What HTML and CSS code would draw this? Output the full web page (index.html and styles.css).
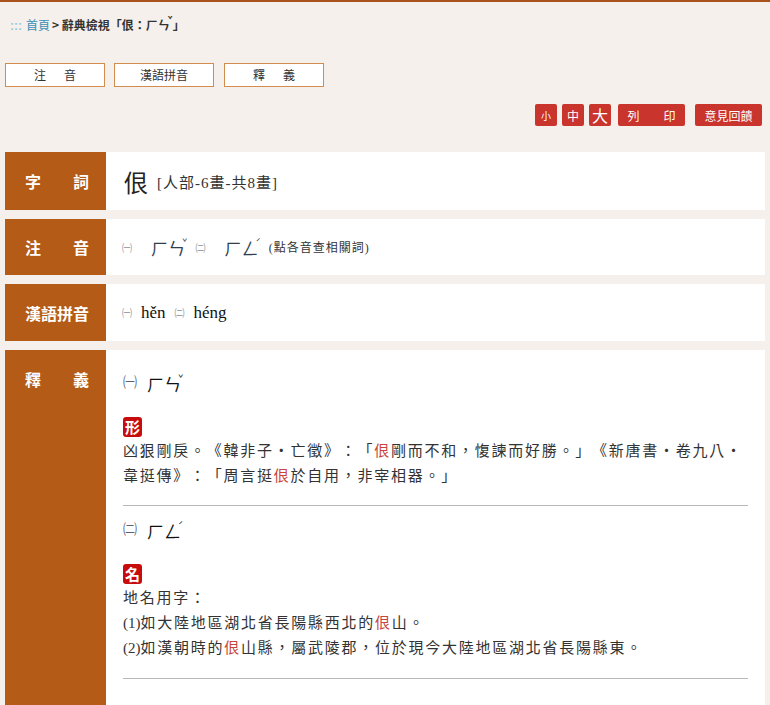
FILE: index.html
```html
<!DOCTYPE html>
<html lang="zh-Hant">
<head>
<meta charset="utf-8">
<title>辭典檢視</title>
<link rel="stylesheet" href="styles.css">
</head>
<body>
<div class="page">
  <div class="crumb"><span class="dots">:::</span><a class="home" href="#">首頁</a><b>&gt; 辭典檢視「佷：ㄏㄣ<span class="tone-s">ˇ</span>」</b></div>

  <div class="tabs">
    <a class="tab" href="#">注&emsp;&ensp;音</a>
    <a class="tab" href="#">漢語拼音</a>
    <a class="tab" href="#">釋&emsp;&ensp;義</a>
  </div>

  <div class="tools">
    <a class="btn sq s" href="#">小</a>
    <a class="btn sq m" href="#">中</a>
    <a class="btn sq l" href="#">大</a>
    <a class="btn wide" href="#">列&emsp;&emsp;印</a>
    <a class="btn wide gap" href="#">意見回饋</a>
  </div>

  <div class="rows">
    <div class="row r1">
      <div class="label"><span class="lt">字詞</span></div>
      <div class="cell"><span class="big">佷</span> <span class="info">[人部-6畫-共8畫]</span></div>
    </div>
    <div class="row r2">
      <div class="label"><span class="lt">注音</span></div>
      <div class="cell">
        <span class="num">㈠</span><a class="zy link" href="#">ㄏㄣ<span class="tone">ˇ</span></a>
        <span class="num">㈡</span><a class="zy link" href="#">ㄏㄥ<span class="tone">ˊ</span></a>
        <span class="hint">(點各音查相關詞)</span>
      </div>
    </div>
    <div class="row r3">
      <div class="label"><span class="lt">漢語拼音</span></div>
      <div class="cell">
        <span class="num">㈠</span><span class="py">hěn</span>
        <span class="num">㈡</span><span class="py">héng</span>
      </div>
    </div>
    <div class="row r4">
      <div class="label top"><span class="lt">釋義</span></div>
      <div class="cell defs">
        <div class="sect">
          <div class="head"><span class="hnum">㈠</span><span class="zy">ㄏㄣ<span class="tone">ˇ</span></span></div>
          <div class="badge">形</div>
          <p class="txt">凶狠剛戾。《韓非子‧亡徵》：「<span class="hl">佷</span>剛而不和，愎諫而好勝。」《新唐書‧卷九八‧韋挺傳》：「周言挺<span class="hl">佷</span>於自用，非宰相器。」</p>
        </div>
        <hr class="rule">
        <div class="sect">
          <div class="head"><span class="hnum">㈡</span><span class="zy">ㄏㄥ<span class="tone">ˊ</span></span></div>
          <div class="badge">名</div>
          <p class="txt">地名用字：</p>
          <p class="txt"><span class="pn">(1)</span>如大陸地區湖北省長陽縣西北的<span class="hl">佷</span>山。</p>
          <p class="txt"><span class="pn">(2)</span>如漢朝時的<span class="hl">佷</span>山縣，屬武陵郡，位於現今大陸地區湖北省長陽縣東。</p>
        </div>
        <hr class="rule">
      </div>
    </div>
  </div>
</div>
</body>
</html>
```

FILE: styles.css
```css
html, body {
  margin: 0;
  padding: 0;
  background: #f5f0eb;
}
body {
  border-top: 2px solid #a9521c;
  font-family: "Noto Sans CJK TC", "Noto Sans", sans-serif;
  color: #333;
  text-spacing-trim: space-all;
}
.page {
  padding: 0 5px;
}
.crumb {
  padding: 10px 0 0 5px;
  height: 18px;
  line-height: 16px;
  font-size: 12px;
  color: #333;
}
.crumb .dots {
  color: #9cc9dc;
  font-family: "Liberation Sans", sans-serif;
  font-size: 12px;
  font-weight: 700;
  margin-right: 4px;
}
.crumb .home {
  color: #3b8db5;
  text-decoration: none;
  margin-right: 2px;
}
.crumb b {
  font-weight: 700;
  color: #333;
}
.tone-s {
  font-size: 8px;
  vertical-align: 7px;
  margin-left: -2px;
}
.tabs {
  margin-top: 33px;
  display: flex;
  gap: 9px;
}
.tab {
  box-sizing: border-box;
  width: 100px;
  height: 24px;
  line-height: 22px;
  border: 1px solid #d28c4e;
  background: #fff;
  text-align: center;
  font-size: 12px;
  color: #333;
  text-decoration: none;
}
.tab + .tab + .tab { margin-left: 1px; }
.tools {
  margin-top: 17px;
  margin-right: 3px;
  display: flex;
  justify-content: flex-end;
  gap: 5px;
  height: 22px;
}
.btn {
  display: flex;
  align-items: center;
  justify-content: center;
  height: 22px;
  background: #c9342c;
  color: #fff;
  text-decoration: none;
  border-radius: 2px;
  font-size: 12px;
}
.btn.sq { width: 22px; }
.btn.s { font-size: 10px; }
.btn.m { font-size: 12px; }
.btn.l { font-size: 16px; }
.btn.wide { width: 67px; margin-left: 2px; }
.btn.gap { margin-left: 5px; }
.rows {
  margin-top: 26px;
  display: flex;
  flex-direction: column;
  gap: 9px;
}
.row {
  display: flex;
  background: #fff;
}
.r1 { min-height: 58px; }
.r2 { min-height: 56px; }
.r3 { min-height: 57px; }
.label {
  flex: 0 0 101px;
  box-sizing: border-box;
  padding: 0 17px 0 20px;
  background: #b45b17;
  color: #fff;
  font-size: 16px;
  font-weight: 700;
  display: flex;
  align-items: center;
}
.label .lt {
  display: block;
  width: 100%;
  text-align: justify;
  text-align-last: justify;
}
.label.top {
  align-items: flex-start;
  padding-top: 17px;
  line-height: 25px;
}
.cell {
  flex: 1;
  display: flex;
  align-items: center;
  padding: 0 17px 0 16px;
  font-family: "Liberation Serif", "Noto Sans CJK TC", serif;
  color: #222;
}
.big {
  font-size: 24px;
  font-family: "Noto Sans CJK TC", serif;
  font-weight: 400;
  margin: 0 9px 0 2px;
  color: #222;
}
.info {
  font-size: 15px;
  letter-spacing: 1px;
  color: #333;
}
.num {
  font-family: "Noto Sans CJK TC", sans-serif;
  font-size: 10px;
  color: #8a9099;
  margin-right: 9px;
}
.zy {
  font-family: "Noto Sans CJK TC", sans-serif;
  font-size: 17px;
  letter-spacing: 0;
  color: #2f3d4c;
  text-decoration: none;
  margin-right: 8px;
}
.zy .tone {
  font-size: 9px;
  vertical-align: 9px;
  margin-left: -3px;
  letter-spacing: 0;
}
.r2 .num + .zy { margin-left: 10px; }
.hint {
  font-size: 12px;
  letter-spacing: 1px;
  color: #333;
}
.py {
  font-size: 17px;
  color: #111;
  margin-right: 9px;
}
.r3 .num { margin-right: 9px; }
.cell.defs {
  display: block;
  padding: 16px 17px 30px 17px;
}
.sect {
  color: #333;
}
.head {
  height: 30px;
  line-height: 30px;
  display: flex;
  align-items: center;
  margin-bottom: 21px;
}
.hnum {
  font-family: "Noto Sans CJK TC", sans-serif;
  font-size: 14px;
  color: #5a6270;
  margin-right: 10px;
}
.head .zy {
  color: #111;
}
.badge {
  width: 19px;
  height: 20px;
  background: #c60c0c;
  color: #fff;
  border-radius: 3px;
  font-family: "Noto Sans CJK TC", sans-serif;
  font-weight: 700;
  font-size: 15px;
  line-height: 20px;
  text-align: center;
  margin-bottom: 2px;
}
.txt {
  margin: 0;
  font-size: 15px;
  line-height: 25px;
  letter-spacing: 1.75px;
  color: #333;
}
.pn {
  letter-spacing: 0;
}
.hl {
  color: #c9443c;
}
.rule {
  border: 0;
  border-top: 1px solid #b8b8b8;
  margin: 16px 0 7px;
  height: 0;
}
.sect + .rule + .sect + .rule {
  margin-top: 17px;
}
```
